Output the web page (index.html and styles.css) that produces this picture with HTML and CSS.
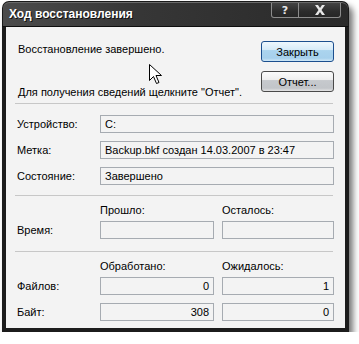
FILE: index.html
```html
<!DOCTYPE html>
<html lang="ru">
<head>
    <meta charset="UTF-8">
    <title>Ход восстановления</title>
    <link rel="stylesheet" href="styles.css">
</head>
<body>
    <div class="window">
        <div class="titlebar">
            <span class="title">Ход восстановления</span>
            <div class="caption-buttons">
                <span class="cap-btn cap-help">?</span>
                <span class="cap-btn cap-close">
                    <svg width="14" height="10" viewBox="0 0 14 10">
                        <path d="M2 0h3l2 3 2-3h3l-3.5 5 3.5 5h-3l-2-3-2 3h-3l3.5-5z" fill="#e6e6e6"/>
                    </svg>
                </span>
            </div>
        </div>

        <div class="content">
            <div class="top">
                <div class="messages">
                    <p>Восстановление завершено.</p>
                    <p>Для получения сведений щелкните "Отчет".</p>
                </div>
                <div class="actions">
                    <button class="btn btn-default">Закрыть</button>
                    <button class="btn">Отчет...</button>
                </div>
            </div>

            <div class="separator"></div>

            <div class="info">
                <span class="label">Устройство:</span>
                <div class="field">C:</div>
                <span class="label">Метка:</span>
                <div class="field">Backup.bkf создан 14.03.2007 в 23:47</div>
                <span class="label">Состояние:</span>
                <div class="field">Завершено</div>
            </div>

            <div class="separator sep-time"></div>

            <div class="stats stats-head">
                <span></span>
                <span>Прошло:</span>
                <span>Осталось:</span>
            </div>
            <div class="stats">
                <span class="label">Время:</span>
                <div class="field"></div>
                <div class="field"></div>
            </div>

            <div class="separator sep-files"></div>

            <div class="stats stats-head">
                <span></span>
                <span>Обработано:</span>
                <span>Ожидалось:</span>
            </div>
            <div class="stats">
                <span class="label">Файлов:</span>
                <div class="field num">0</div>
                <div class="field num">1</div>
                <span class="label">Байт:</span>
                <div class="field num">308</div>
                <div class="field num">0</div>
            </div>
        </div>
    </div>

    <svg class="pointer" width="13" height="21" viewBox="0 0 13 21">
        <path d="M0.5 0.5v16l4-4 3 7 2.5-1-3-7h5.5z" fill="#fff" stroke="#000" stroke-width="1"/>
    </svg>
</body>
</html>
```

FILE: styles.css
```css
* {
    margin: 0;
    padding: 0;
    box-sizing: border-box;
}

body {
    background: #fff;
    font-family: "Liberation Sans", Arial, sans-serif;
    font-size: 11px;
    color: #000;
}

.window {
    width: 347px;
    margin: 1px 0 0 2px;
    border-radius: 7px 7px 0 0;
    box-shadow: 4px 5px 6px rgba(0, 0, 0, 0.55);
}

.titlebar {
    height: 26px;
    display: flex;
    justify-content: space-between;
    align-items: flex-start;
    padding: 0 7px 0 6px;
    background: linear-gradient(90deg, #4c4c4c, #363636 40%, #2a2a2a);
    border: 1px solid #1a1a1a;
    border-bottom-color: #0e0e0e;
    border-radius: 7px 7px 0 0;
    box-shadow: inset 0 1px 0 #6a6a6a;
}

.title {
    color: #fff;
    font-family: "Liberation Sans", Arial, sans-serif;
    font-weight: bold;
    font-size: 12px;
    line-height: 25px;
    text-shadow: 1px 1px 0 #111;
}

.caption-buttons {
    display: flex;
    margin-top: 1px;
}

.cap-btn {
    height: 15px;
    display: flex;
    align-items: center;
    justify-content: center;
    border: 1px solid #8c8c8c;
    border-top: none;
    background: linear-gradient(#444, #2c2c2c 60%, #262626);
    color: #e6e6e6;
    font-family: "DejaVu Sans", sans-serif;
    font-weight: bold;
    font-size: 11px;
}

.cap-help {
    width: 28px;
    border-radius: 0 0 0 3px;
}

.cap-close {
    width: 42px;
    border-left: none;
    border-radius: 0 0 3px 0;
}

.content {
    background: #f3f3f3;
    border: 4px solid #1c1c1c;
    border-top: none;
    padding: 0 11px 7px 9px;
}

.top {
    display: flex;
    justify-content: space-between;
    padding-top: 14px;
}

.messages {
    padding: 2px 0 0 3px;
}

.messages p {
    line-height: 13px;
}

.messages p + p {
    margin-top: 30px;
}

.actions {
    display: flex;
    flex-direction: column;
    gap: 9px;
}

.btn {
    width: 73px;
    height: 21px;
    font-family: "Liberation Sans", Arial, sans-serif;
    font-size: 11px;
    color: #000;
    border: 1px solid #4a4a4a;
    border-radius: 3px;
    background: linear-gradient(#fbfbfb, #eeeeee 40%, #c6c9cd 45%, #c2c5c9 85%, #e4e4e4);
    cursor: pointer;
}

.btn-default {
    border-color: #1c4f8e;
    background: linear-gradient(#eef7fd, #d6ebf8 40%, #abd4ee 45%, #a6d0ec 85%, #d0e8f7);
}

.separator {
    height: 1px;
    margin: 4px 1px 0 0;
    background: #c7c7c7;
}

.sep-time {
    margin-top: 10px;
}

.sep-files {
    margin-top: 12px;
}

.info {
    display: grid;
    grid-template-columns: 85px 1fr;
    row-gap: 8px;
    align-items: center;
    margin-top: 11px;
}

.label {
    padding-left: 2px;
}

.field {
    height: 18px;
    line-height: 16px;
    padding: 0 4px;
    border: 1px solid #a6abb1;
    background: #f3f3f3;
    white-space: nowrap;
}

.field.num {
    text-align: right;
}

.stats {
    display: grid;
    grid-template-columns: 77px 114px 112px;
    column-gap: 8px;
    row-gap: 8px;
    align-items: center;
}

.stats-head {
    margin: 8px 0 4px;
    line-height: 13px;
}

.pointer {
    position: absolute;
    left: 149px;
    top: 64px;
}
```
